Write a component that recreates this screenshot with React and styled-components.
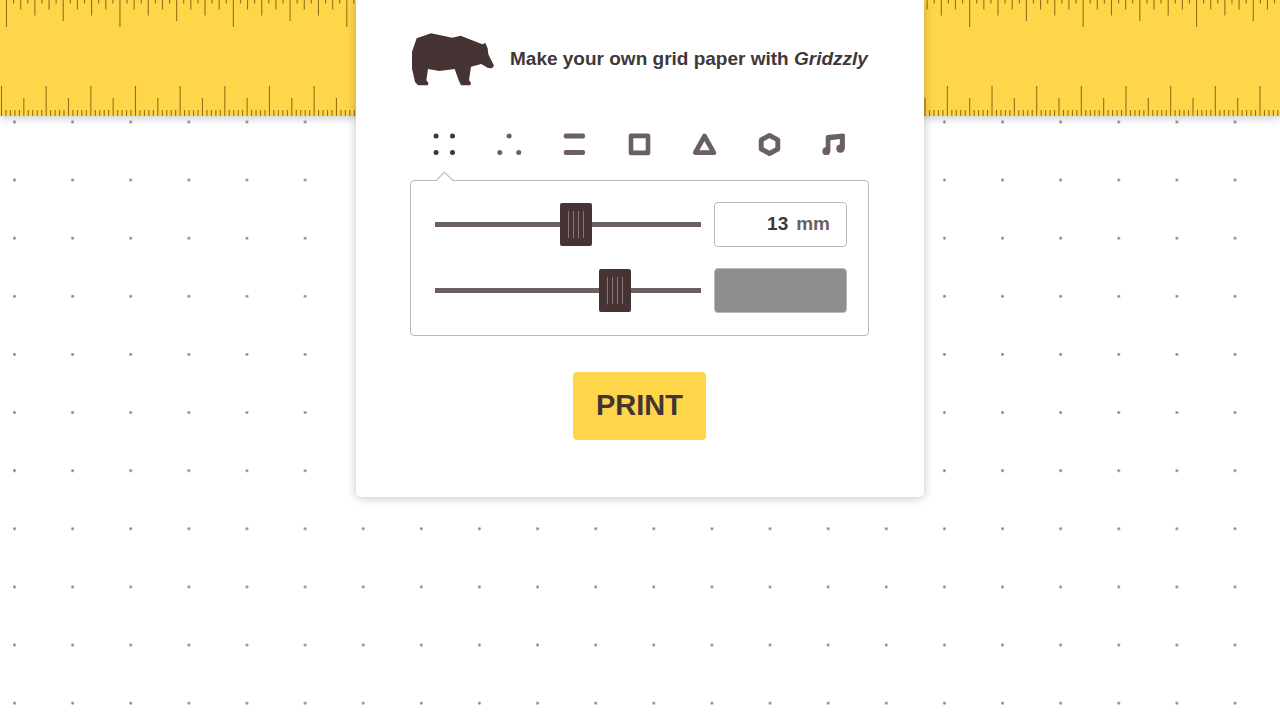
import React, { useState } from "react";
import styled, { createGlobalStyle } from "styled-components";

const ink = "#463334";
const soft = "#6b5f60";
const yellow = "#ffd54a";
const line = "#b9b9b9";

const GlobalStyle = createGlobalStyle`
  *, *::before, *::after { box-sizing: border-box; }
  html, body { margin: 0; min-height: 100%; background: #fff; }
  body {
    font-family: "Liberation Sans", Arial, Helvetica, sans-serif;
    font-weight: 700;
    color: #3f3838;
  }
`;

const Page = styled.div`
  position: relative;
  min-height: 100vh;
  overflow: hidden;
  display: grid;
  grid-template-rows: 116px auto;
  justify-items: center;
  align-items: start;
`;

const Paper = styled.svg`
  position: absolute;
  inset: 0;
  width: 100%;
  height: 100%;
`;

const Ruler = styled.div`
  position: relative;
  grid-area: 1 / 1;
  justify-self: stretch;
  display: flex;
  height: 116px;
  background: ${yellow};
  box-shadow: 0 1px 10px rgba(0, 0, 0, 0.24);
`;

const RulerHalf = styled.svg`
  flex: 1;
  min-width: 0;
  height: 116px;
  overflow: hidden;
`;

const Panel = styled.main`
  position: relative;
  grid-area: 1 / 1 / 3 / 2;
  width: 100%;
  max-width: 568px;
  padding: 33px 55px 57px 54px;
  background: #fff;
  border-radius: 0 0 5px 5px;
  box-shadow: 0 1px 10px rgba(0, 0, 0, 0.24);
`;

const Header = styled.header`
  display: flex;
  align-items: center;
  gap: 14px;
  padding-left: 2px;
`;

const BearMark = styled.svg`
  flex: none;
  width: 84px;
  height: 54px;
`;

const Title = styled.h1`
  margin: 0 0 2px;
  font-size: 19px;
  line-height: 24px;
  white-space: nowrap;
`;

const Tabs = styled.div`
  display: flex;
  justify-content: center;
  margin-top: 40px;
  height: 53px;
`;

const Tab = styled.label`
  position: relative;
  flex: 0 1 65px;
  display: flex;
  justify-content: center;
  align-items: flex-start;
  padding-top: 2px;
  cursor: pointer;
  color: ${(p) => (p.$active ? "#3c3637" : soft)};
`;

const TabInput = styled.input`
  position: absolute;
  width: 1px;
  height: 1px;
  margin: 0;
  opacity: 0;
`;

const Glyph = styled.svg`
  width: 31px;
  height: 31px;
`;

const Pointer = styled.svg`
  position: absolute;
  z-index: 1;
  left: 50%;
  bottom: -2px;
  width: 19px;
  height: 11px;
  margin-left: -10px;
`;

const Settings = styled.section`
  display: grid;
  gap: 21px;
  padding: 21px 21px 22px 24px;
  border: 1px solid ${line};
  border-radius: 4px;
`;

const Row = styled.div`
  display: flex;
  align-items: center;
  gap: 13px;
`;

const Slider = styled.input`
  appearance: none;
  flex: 1;
  min-width: 0;
  height: 45px;
  margin: 0;
  background: transparent;
  cursor: pointer;

  &::-webkit-slider-runnable-track {
    height: 5px;
    background: ${soft};
  }

  &::-webkit-slider-thumb {
    appearance: none;
    width: 32px;
    height: 43px;
    margin-top: -19px;
    border-radius: 2px;
    background:
      repeating-linear-gradient(90deg, #8a7474 0 1px, transparent 1px 5px)
      8px 8px / 16px 27px no-repeat ${ink};
  }
`;

const SizeBox = styled.label`
  display: flex;
  align-items: center;
  gap: 8px;
  width: 133px;
  height: 45px;
  padding: 0 16px 2px;
  border: 1px solid ${line};
  border-radius: 4px;
  font-size: 19px;
  line-height: 24px;
  color: ${soft};
`;

const SizeInput = styled.input`
  flex: 1;
  min-width: 0;
  padding: 0;
  border: 0;
  outline: 0;
  background: transparent;
  font: inherit;
  text-align: right;
  color: #3f3838;
`;

const Swatch = styled.div`
  width: 133px;
  height: 45px;
  border: 1px solid ${line};
  border-radius: 4px;
  background: #8e8e8e;
`;

const PrintButton = styled.button`
  display: block;
  width: 133px;
  height: 68px;
  margin: 36px auto 0;
  padding: 0 0 2px;
  border: 0;
  border-radius: 4px;
  background: ${yellow};
  color: ${ink};
  font: inherit;
  font-size: 29px;
  line-height: 36px;
  cursor: pointer;
`;

const CM = 44.66;
const INCH = CM * 2.54;
const REACH = 2000;

function inchTicks(start) {
  const step = INCH / 16;
  let d = "";
  for (let i = -16; start + i * step < REACH; i++) {
    const n = (i + 16) % 16;
    const h = n === 0 ? 27 : n === 8 ? 21 : n % 4 === 0 ? 15.5 : n % 2 === 0 ? 9.5 : 3.5;
    d += `M${(start + i * step).toFixed(2)} 0v${h}`;
  }
  return d;
}

function cmTicks(start) {
  const step = CM / 10;
  let d = "";
  for (let i = -10; start + i * step < REACH; i++) {
    const n = (i + 10) % 10;
    const h = n === 0 ? 30 : n === 5 ? 18 : 6;
    d += `M${(start + i * step).toFixed(2)} 116v${-h}`;
  }
  return d;
}

function Scale({ inch, cm }) {
  return (
    <RulerHalf aria-hidden="true">
      <path d={inchTicks(inch) + cmTicks(cm)} stroke="#705006" strokeOpacity="0.75" strokeWidth="1.1" fill="none" />
    </RulerHalf>
  );
}

const patterns = [
  {
    id: "Dots",
    art: (
      <g fill="currentColor" stroke="none">
        <circle cx="-8.4" cy="-8.5" r="2.5" />
        <circle cx="8" cy="-8.5" r="2.5" />
        <circle cx="-8.4" cy="8" r="2.5" />
        <circle cx="8" cy="8" r="2.5" />
      </g>
    ),
  },
  {
    id: "Triangular dots",
    art: (
      <g fill="currentColor" stroke="none">
        <circle cx="-0.4" cy="-8.5" r="2.5" />
        <circle cx="-9.7" cy="8" r="2.5" />
        <circle cx="9.2" cy="8" r="2.5" />
      </g>
    ),
  },
  {
    id: "Lines",
    art: (
      <g fill="currentColor" stroke="none">
        <rect x="-10.8" y="-10.9" width="21.4" height="4.9" rx="2.2" />
        <rect x="-10.8" y="5.6" width="21.4" height="4.9" rx="2.2" />
      </g>
    ),
  },
  {
    id: "Squares",
    art: <rect x="-8.5" y="-8.6" width="17" height="17" />,
  },
  {
    id: "Triangles",
    art: <path d="M0 -8.4L9.2 8.1H-9.2Z" strokeWidth="4.9" />,
  },
  {
    id: "Hexagons",
    art: <path d="M0 -9.1L8.3 -4.6V4.5L0 9L-8.3 4.5V-4.6Z" strokeWidth="4.9" />,
  },
  {
    id: "Music staves",
    art: (
      <g fill="currentColor" stroke="none">
        <circle cx="-8.2" cy="6.7" r="3.9" />
        <circle cx="5.9" cy="4.2" r="4.1" />
        <path d="M-8.8 6.7V-7.6Q-8.8 -9.3 -7.2 -9.6L8.6 -11Q10.4 -11.1 10.4 -9.4V4.6H5.3V-5.4L-4.1 -4.2V6.7Z" />
      </g>
    ),
  },
];

function Icon({ children }) {
  return (
    <Glyph
      viewBox="-15.5 -15.5 31 31"
      fill="none"
      stroke="currentColor"
      strokeWidth="4.6"
      strokeLinejoin="round"
      aria-hidden="true"
    >
      {children}
    </Glyph>
  );
}

export default function App() {
  const [pattern, setPattern] = useState("Dots");
  const [size, setSize] = useState(13);
  const [weight, setWeight] = useState(70);

  return (
    <Page>
      <GlobalStyle />
      <Paper aria-hidden="true">
        <defs>
          <pattern id="grid" x="-14.56" y="92.94" width="58.12" height="58.12" patternUnits="userSpaceOnUse">
            <circle cx="29.06" cy="29.06" r="1.4" fill="#858585" />
          </pattern>
        </defs>
        <rect width="100%" height="100%" fill="url(#grid)" />
      </Paper>

      <Ruler>
        <Scale inch={6.5} cm={1.5} />
        <Scale inch={102.8} cm={39.4} />
      </Ruler>

      <Panel>
        <Header>
          <BearMark viewBox="38 38 252 162" aria-hidden="true">
            <path
              fill={ink}
              d="M52 54L95 39L159 52L184 46L249 72L258 68L265 84L267 102L284 136L278 144L266 143L246 131L215 139L209 180L215 187L213 195H185L178 180L166 146L120 152L86 146L81 180L87 187L86 195H56L47 185L38 145V94Z"
            />
          </BearMark>
          <Title>
            Make your own grid paper with <em>Gridzzly</em>
          </Title>
        </Header>

        <Tabs role="radiogroup" aria-label="Paper pattern">
          {patterns.map(({ id, art }) => (
            <Tab key={id} $active={pattern === id}>
              <TabInput
                type="radio"
                name="pattern"
                aria-label={id}
                checked={pattern === id}
                onChange={() => setPattern(id)}
              />
              <Icon>{art}</Icon>
              {pattern === id && (
                <Pointer viewBox="0 0 19 11" aria-hidden="true">
                  <path d="M0 11V10L1.5 9L9.5 1.2L17.5 9L19 10V11Z" fill="#fff" />
                  <path d="M0 9.5H1.2L9.5 1.2L17.8 9.5H19" fill="none" stroke={line} strokeWidth="1.1" />
                </Pointer>
              )}
            </Tab>
          ))}
        </Tabs>

        <Settings aria-label="Grid settings">
          <Row>
            <Slider
              type="range"
              min="5"
              max="20"
              value={size}
              aria-label="Grid size"
              onChange={(e) => setSize(Number(e.target.value))}
            />
            <SizeBox>
              <SizeInput
                aria-label="Size in millimetres"
                inputMode="numeric"
                value={size}
                onChange={(e) => setSize(Number(e.target.value) || 0)}
              />
              mm
            </SizeBox>
          </Row>
          <Row>
            <Slider
              type="range"
              min="0"
              max="100"
              value={weight}
              aria-label="Grid colour weight"
              onChange={(e) => setWeight(Number(e.target.value))}
            />
            <Swatch />
          </Row>
        </Settings>

        <PrintButton type="button" onClick={() => window.print()}>
          PRINT
        </PrintButton>
      </Panel>
    </Page>
  );
}
